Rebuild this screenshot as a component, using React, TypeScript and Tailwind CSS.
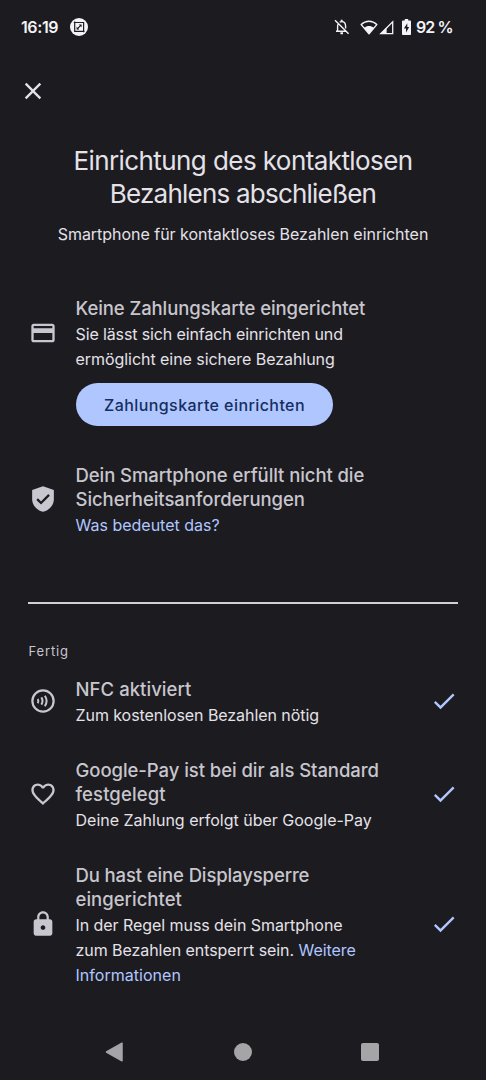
import type { ReactNode } from "react";

const LINK = "text-[#b0c6ff]";

function StatusBar() {
  return (
    <div className="flex h-[54px] items-center pl-[21px] pr-[34px] text-[#f4f3f7]">
      <span className="w-[38px] whitespace-nowrap text-[16px] font-semibold tracking-[-0.4px]">16:19</span>
      <svg className="ml-[11px] h-[18px] w-[18px]" viewBox="0 0 18 18" fill="none">
        <circle cx="9" cy="9" r="9" fill="#f4f3f7" />
        <path d="M3.8 4.5H13.6V14.2M4.7 3.6V13.3H14.5" stroke="#1c1b20" strokeWidth="1.2" />
        <path d="M7.2 11 11 7.2" stroke="#1c1b20" strokeWidth="1.1" />
        <path d="M8.8 6.5H11.6V9.2ZM6.6 8.8V11.5H9.3Z" fill="#1c1b20" />
      </svg>
      <svg className="ml-auto h-[16px] w-[16px]" viewBox="0 0 16 16" fill="none" stroke="currentColor" strokeWidth="1.4">
        <path d="M1 1.2 14.6 14.8M4 5.3C3.7 6 3.6 6.6 3.6 7.4V12M2 12.2H12M5.7 3.2C6.3 2.8 7 2.6 7.7 2.6 10.2 2.6 11.6 4.6 11.6 7.2V9.6" />
        <path d="M7.7.8V2.6M6.4 14.2H9" strokeWidth="1.9" />
      </svg>
      <svg className="ml-[10px] h-[15px] w-[18px]" viewBox="0 0 18 15">
        <path d="M1.2 4.6C5.6.1 12.4.1 16.8 4.6L9 13.8Z" fill="none" stroke="currentColor" strokeWidth="1.4" strokeLinejoin="round" />
        <path d="M4.2 7.8C7 5.3 11 5.3 13.8 7.8L9 14Z" fill="currentColor" />
      </svg>
      <svg className="ml-px h-[15px] w-[15px]" viewBox="0 0 15 15">
        <path d="M1.8 13.7H13.7V1.8Z" fill="none" stroke="currentColor" strokeWidth="1.3" />
        <path d="M1.3 14 7.6 7.6V14Z" fill="currentColor" />
      </svg>
      <svg className="ml-[8px] h-[16px] w-[9px]" viewBox="0 0 9 16">
        <path d="M2.8 0H6.2V1.6H8.2Q9 1.6 9 2.4V15.2Q9 16 8.2 16H.8Q0 16 0 15.2V2.4Q0 1.6.8 1.6H2.8Z" fill="currentColor" />
        <path d="M5.3 4.2 1.9 9.5H4V13.4L7.2 8.1H5.3Z" fill="#1c1b20" />
      </svg>
      <span className="ml-[5px] w-[36px] whitespace-nowrap text-[16px] font-semibold tracking-[-0.9px]">92 %</span>
    </div>
  );
}

function CardIcon() {
  return (
    <svg className="h-7 w-7" viewBox="0 0 24 24" fill="currentColor">
      <path d="M20 4H4c-1.11 0-1.99.89-1.99 2L2 18c0 1.11.89 2 2 2h16c1.11 0 2-.89 2-2V6c0-1.11-.89-2-2-2zm0 14H4v-6h16v6zm0-10H4V6h16v2z" />
    </svg>
  );
}

function ShieldIcon() {
  return (
    <svg className="h-7 w-7" viewBox="0 0 24 24" fill="none">
      <path d="M12 1 2.7 4.3V12C2.7 17.6 7 21.8 12 23 17 21.8 21.3 17.6 21.3 12V4.3Z" fill="currentColor" />
      <path d="M7 12.1 10.3 15.4 17.2 8.5" stroke="#1c1b20" strokeWidth="2" />
    </svg>
  );
}

function NfcIcon() {
  return (
    <svg className="h-7 w-7" viewBox="0 0 24 24" fill="none" stroke="currentColor">
      <circle cx="12" cy="12" r="9.1" strokeWidth="1.9" />
      <path d="M7.5 10.2Q8.6 12 7.5 13.9M10.6 8.9Q12.6 12 10.6 15.1M13.6 7.5Q16.6 12 13.6 16.5" strokeWidth="1.7" />
    </svg>
  );
}

function HeartIcon() {
  return (
    <svg className="h-7 w-7" viewBox="0 0 24 24" fill="currentColor">
      <path d="M16.5 3c-1.74 0-3.41.81-4.5 2.09C10.91 3.81 9.24 3 7.5 3 4.42 3 2 5.42 2 8.5c0 3.78 3.4 6.86 8.55 11.54L12 21.35l1.45-1.32C18.6 15.36 22 12.28 22 8.5 22 5.42 19.58 3 16.5 3zm-4.4 15.55l-.1.1-.1-.1C7.14 14.24 4 11.39 4 8.5 4 6.5 5.5 5 7.5 5c1.54 0 3.04.99 3.57 2.36h1.87C13.46 5.99 14.96 5 16.5 5c2 0 3.5 1.5 3.5 3.5 0 2.89-3.14 5.74-7.9 10.05z" />
    </svg>
  );
}

function LockIcon() {
  return (
    <svg className="h-7 w-7" viewBox="0 0 24 24" fill="currentColor">
      <path d="M18 8h-1V6c0-2.76-2.24-5-5-5S7 3.24 7 6v2H6c-1.1 0-2 .9-2 2v10c0 1.1.9 2 2 2h12c1.1 0 2-.9 2-2V10c0-1.1-.9-2-2-2zm-6 9c-1.1 0-2-.9-2-2s.9-2 2-2 2 .9 2 2-.9 2-2 2zm3.1-9H8.9V6c0-1.71 1.39-3.1 3.1-3.1 1.71 0 3.1 1.39 3.1 3.1v2z" />
    </svg>
  );
}

function Item({ icon, done, children }: { icon: ReactNode; done?: boolean; children: ReactNode }) {
  return (
    <div className="flex items-center pl-[28.5px] pr-[28.5px]">
      <div className="mb-[3px] mr-[19px] shrink-0 text-[#c8c6cf]">{icon}</div>
      <div className="flex-1">{children}</div>
      {done && (
        <svg className="mb-[3px] h-7 w-7 text-[#b0c6ff]" viewBox="0 0 24 24" fill="currentColor">
          <path d="M9 16.17L4.83 12l-1.42 1.41L9 19 21 7l-1.41-1.41z" />
        </svg>
      )}
    </div>
  );
}

function Line({ className, children }: { className: string; children: ReactNode }) {
  return <span className={`block whitespace-nowrap ${className}`}>{children}</span>;
}

function Heading({ children }: { children: ReactNode }) {
  return <h2 className="text-[18.5px] font-medium leading-6 text-[#c8c6cd]">{children}</h2>;
}

function Body({ children }: { children: ReactNode }) {
  return <p className="mt-[2px] text-[16px] leading-[25px] text-[#e4e2e8]">{children}</p>;
}

export default function App() {
  return (
    <div className="flex h-[1080px] w-[486px] flex-col overflow-hidden bg-[#1c1b20] font-['Inter',sans-serif]">
      <StatusBar />

      <button className="ml-[19px] mt-[23px] h-7 w-7 text-[#e4e2e8]">
        <svg className="h-7 w-7" viewBox="0 0 24 24" fill="currentColor">
          <path d="M19 6.41L17.59 5 12 10.59 6.41 5 5 6.41 10.59 12 5 17.59 6.41 19 12 13.41 17.59 19 19 17.59 13.41 12z" />
        </svg>
      </button>

      <header className="mt-[39px] text-center text-[#e4e2e8]">
        <h1 className="text-[26px] leading-[33px]">
          <Line className="tracking-[-0.58px]">Einrichtung des kontaktlosen</Line>
          <Line className="tracking-[-0.78px]">Bezahlens abschließen</Line>
        </h1>
        <p className="mt-3 text-[16px] leading-6 tracking-[-0.03px]">Smartphone für kontaktloses Bezahlen einrichten</p>
      </header>

      <section className="mt-[50px]">
        <Item icon={<CardIcon />}>
          <Heading>
            <Line className="tracking-[-0.09px]">Keine Zahlungskarte eingerichtet</Line>
          </Heading>
          <Body>
            <Line className="tracking-[-0.12px]">Sie lässt sich einfach einrichten und</Line>
            <Line className="tracking-[-0.05px]">ermöglicht eine sichere Bezahlung</Line>
          </Body>
        </Item>
        <button className="ml-[76px] mt-[11px] flex h-[43px] w-[257px] items-center justify-center rounded-full bg-[#b0c6ff] text-[16px] font-medium tracking-[0.42px] text-[#152e60]">
          Zahlungskarte einrichten
        </button>
      </section>

      <section className="mt-[37px]">
        <Item icon={<ShieldIcon />}>
          <Heading>
            <Line className="tracking-[-0.08px]">Dein Smartphone erfüllt nicht die</Line>
            <Line className="tracking-[-0.06px]">Sicherheitsanforderungen</Line>
          </Heading>
          <Body>
            <Line className={`tracking-[0px] ${LINK}`}>Was bedeutet das?</Line>
          </Body>
        </Item>
      </section>

      <hr className="mx-[28px] mt-[64px] border-t-2 border-[#d2d0d6]" />

      <div className="ml-[28.5px] mt-[37px] text-[13px] leading-5 tracking-[0.85px] text-[#c8c6cd]">Fertig</div>

      <section className="mt-[16px] flex flex-col gap-[30px]">
        <Item icon={<NfcIcon />} done>
          <Heading>
            <Line className="tracking-[0.06px]">NFC aktiviert</Line>
          </Heading>
          <Body>
            <Line className="tracking-[-0.07px]">Zum kostenlosen Bezahlen nötig</Line>
          </Body>
        </Item>
        <Item icon={<HeartIcon />} done>
          <Heading>
            <Line className="tracking-[-0.06px]">Google-Pay ist bei dir als Standard</Line>
            <Line className="tracking-[0.1px]">festgelegt</Line>
          </Heading>
          <Body>
            <Line className="tracking-[0px]">Deine Zahlung erfolgt über Google-Pay</Line>
          </Body>
        </Item>
        <Item icon={<LockIcon />} done>
          <Heading>
            <Line className="tracking-[-0.12px]">Du hast eine Displaysperre</Line>
            <Line className="tracking-[0.02px]">eingerichtet</Line>
          </Heading>
          <Body>
            <Line className="tracking-[-0.06px]">In der Regel muss dein Smartphone</Line>
            <Line className="tracking-[-0.06px]">
              zum Bezahlen entsperrt sein. <a className={LINK}>Weitere</a>
            </Line>
            <Line className={`tracking-[0.03px] ${LINK}`}>Informationen</Line>
          </Body>
        </Item>
      </section>

      <nav className="mb-[18px] mt-auto flex h-5 items-center pl-[105px] pr-[107px] text-[#a5a5a8]">
        <svg className="h-5 w-[18px]" viewBox="0 0 18 20">
          <path d="M17 1.2V18.8L1.5 10Z" fill="currentColor" stroke="currentColor" strokeWidth="1.5" strokeLinejoin="round" />
        </svg>
        <div className="ml-[111px] h-[18px] w-[18px] rounded-full bg-current" />
        <div className="ml-auto h-[18px] w-[18px] rounded-[2px] bg-current" />
      </nav>
    </div>
  );
}
